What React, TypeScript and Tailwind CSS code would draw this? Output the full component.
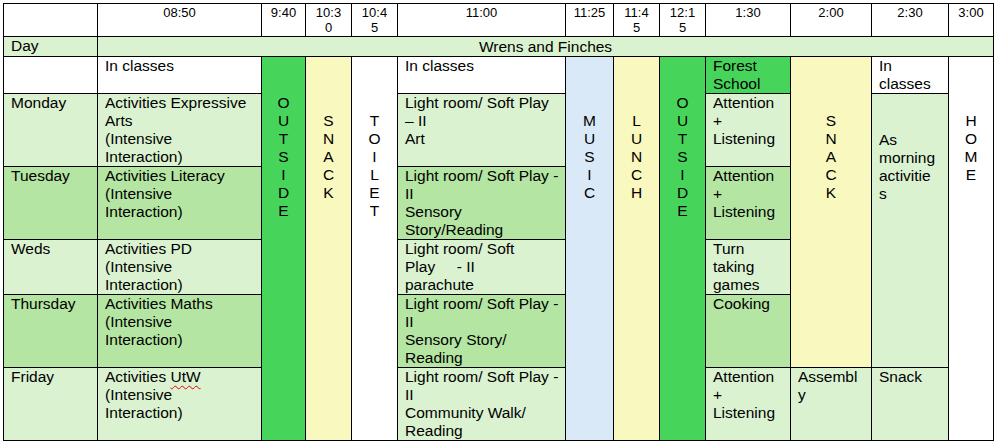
import clsx from 'clsx';
import type { ReactNode } from 'react';

// palette taken from the timetable
const LIGHT = 'bg-[#daf2d0]';
const MID = 'bg-[#b4e5a2]';
const GREEN = 'bg-[#47d45b]';
const YELLOW = 'bg-[#f9f9bf]';
const BLUE = 'bg-[#dae9f8]';

function Cell({ className, lines }: { className?: string; lines?: ReactNode[] }) {
  return (
    <div className={clsx('px-[7px] text-[15.5px] leading-[18px]', className)}>
      {lines?.map((l, i) => (
        <div key={i} className="whitespace-pre">
          {l}
        </div>
      ))}
    </div>
  );
}

function Time({ className, lines }: { className: string; lines: string[] }) {
  return (
    <div className={clsx('bg-white pt-px text-center text-[13px] leading-[15px]', className)}>
      {lines.map((l) => (
        <div key={l}>{l}</div>
      ))}
    </div>
  );
}

function Vertical({ className, word, top }: { className: string; word: string; top: string }) {
  return (
    <div className={clsx('row-start-3 flex flex-col items-center text-[15.5px] leading-[18px]', top, className)}>
      {word.split('').map((ch, i) => (
        <div key={i}>{ch}</div>
      ))}
    </div>
  );
}

export default function App() {
  return (
    <div className="h-[445px] w-[997px] bg-white pl-[3px] pt-[3px] font-['Liberation_Sans',Arial,sans-serif] text-black">
      <div className="grid w-fit grid-cols-[93px_163px_43px_45px_45px_167px_47px_45px_45px_84px_80px_76px_44px] grid-rows-[32px_19px_36px_72px_72px_54px_72px_72px] gap-px bg-black p-px">
        {/* header times */}
        <div className="col-start-1 row-start-1 bg-white" />
        <Time className="col-start-2 row-start-1" lines={['08:50']} />
        <Time className="col-start-3 row-start-1" lines={['9:40']} />
        <Time className="col-start-4 row-start-1" lines={['10:3', '0']} />
        <Time className="col-start-5 row-start-1" lines={['10:4', '5']} />
        <Time className="col-start-6 row-start-1" lines={['11:00']} />
        <Time className="col-start-7 row-start-1" lines={['11:25']} />
        <Time className="col-start-8 row-start-1" lines={['11:4', '5']} />
        <Time className="col-start-9 row-start-1" lines={['12:1', '5']} />
        <Time className="col-start-10 row-start-1" lines={['1:30']} />
        <Time className="col-start-11 row-start-1" lines={['2:00']} />
        <Time className="col-start-12 row-start-1" lines={['2:30']} />
        <Time className="col-start-13 row-start-1" lines={['3:00']} />

        {/* group row */}
        <Cell className={clsx('col-start-1 row-start-2', LIGHT)} lines={['Day']} />
        <div className={clsx('col-start-2 col-span-12 row-start-2 text-center text-[15.5px] leading-[19px]', LIGHT)}>
          Wrens and Finches
        </div>

        {/* in classes row */}
        <div className="col-start-1 row-start-3 bg-white" />
        <Cell className="col-start-2 row-start-3 bg-white" lines={['In classes']} />
        <Cell className="col-start-6 row-start-3 bg-white" lines={['In classes']} />
        <Cell className={clsx('col-start-10 row-start-3', GREEN)} lines={['Forest', 'School']} />
        <Cell className="col-start-12 row-start-3 bg-white" lines={['In', 'classes']} />

        {/* whole-day columns */}
        <Vertical className={clsx('col-start-3 row-span-6', GREEN)} word="OUTSIDE" top="pt-[37px]" />
        <Vertical className={clsx('col-start-4 row-span-6', YELLOW)} word="SNACK" top="pt-[55px]" />
        <Vertical className="col-start-5 row-span-6 bg-white" word="TOILET" top="pt-[55px]" />
        <Vertical className={clsx('col-start-7 row-span-6', BLUE)} word="MUSIC" top="pt-[55px]" />
        <Vertical className={clsx('col-start-8 row-span-6', YELLOW)} word="LUNCH" top="pt-[55px]" />
        <Vertical className={clsx('col-start-9 row-span-6', GREEN)} word="OUTSIDE" top="pt-[37px]" />
        <Vertical className={clsx('col-start-11 row-span-5', YELLOW)} word="SNACK" top="pt-[55px]" />
        <Vertical className="col-start-13 row-span-6 bg-white" word="HOME" top="pt-[55px]" />

        {/* Monday */}
        <Cell className={clsx('col-start-1 row-start-4', LIGHT)} lines={['Monday']} />
        <Cell className={clsx('col-start-2 row-start-4', LIGHT)} lines={['Activities Expressive', 'Arts', '(Intensive', 'Interaction)']} />
        <Cell className={clsx('col-start-6 row-start-4', LIGHT)} lines={['Light room/ Soft Play', '– II', 'Art']} />
        <Cell className={clsx('col-start-10 row-start-4', LIGHT)} lines={['Attention', '+', 'Listening']} />
        <Cell className={clsx('col-start-12 row-start-4 row-span-4 pt-[37px]', LIGHT)} lines={['As', 'morning', 'activitie', 's']} />

        {/* Tuesday */}
        <Cell className={clsx('col-start-1 row-start-5', MID)} lines={['Tuesday']} />
        <Cell className={clsx('col-start-2 row-start-5', MID)} lines={['Activities Literacy', '(Intensive', 'Interaction)']} />
        <Cell className={clsx('col-start-6 row-start-5', MID)} lines={['Light room/ Soft Play -', 'II', 'Sensory', 'Story/Reading']} />
        <Cell className={clsx('col-start-10 row-start-5', MID)} lines={['Attention', '+', 'Listening']} />

        {/* Weds */}
        <Cell className={clsx('col-start-1 row-start-6', LIGHT)} lines={['Weds']} />
        <Cell className={clsx('col-start-2 row-start-6', LIGHT)} lines={['Activities PD', '(Intensive', 'Interaction)']} />
        <Cell className={clsx('col-start-6 row-start-6', LIGHT)} lines={['Light room/ Soft', 'Play     - II', 'parachute']} />
        <Cell className={clsx('col-start-10 row-start-6', LIGHT)} lines={['Turn', 'taking', 'games']} />

        {/* Thursday */}
        <Cell className={clsx('col-start-1 row-start-7', MID)} lines={['Thursday']} />
        <Cell className={clsx('col-start-2 row-start-7', MID)} lines={['Activities Maths', '(Intensive', 'Interaction)']} />
        <Cell className={clsx('col-start-6 row-start-7', MID)} lines={['Light room/ Soft Play -', 'II', 'Sensory Story/', 'Reading']} />
        <Cell className={clsx('col-start-10 row-start-7', MID)} lines={['Cooking']} />

        {/* Friday */}
        <Cell className={clsx('col-start-1 row-start-8', LIGHT)} lines={['Friday']} />
        <Cell
          className={clsx('col-start-2 row-start-8', LIGHT)}
          lines={[
            <>
              Activities{' '}
              <span className="underline decoration-red-600 decoration-wavy decoration-1 underline-offset-[3px]">UtW</span>
            </>,
            '(Intensive',
            'Interaction)',
          ]}
        />
        <Cell className={clsx('col-start-6 row-start-8', LIGHT)} lines={['Light room/ Soft Play -', 'II', 'Community Walk/', 'Reading']} />
        <Cell className={clsx('col-start-10 row-start-8', LIGHT)} lines={['Attention', '+', 'Listening']} />
        <Cell className={clsx('col-start-11 row-start-8', LIGHT)} lines={['Assembl', 'y']} />
        <Cell className={clsx('col-start-12 row-start-8', LIGHT)} lines={['Snack']} />
      </div>
    </div>
  );
}
